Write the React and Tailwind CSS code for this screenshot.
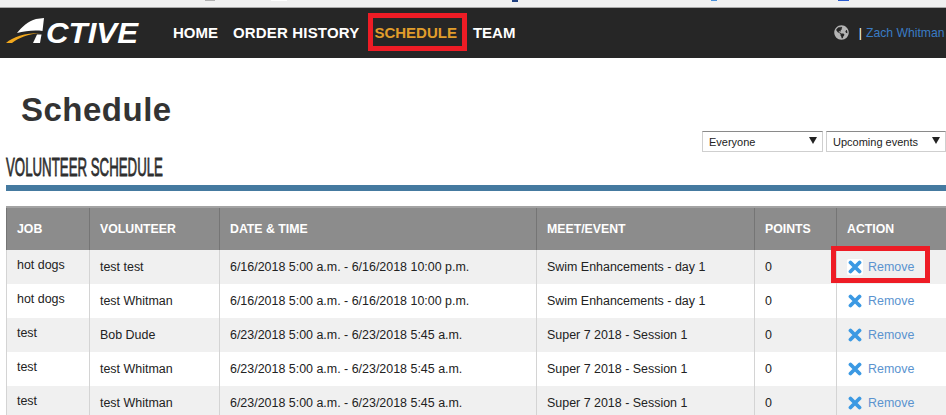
import React from "react";
import { FaGlobeAmericas } from "react-icons/fa";

const rows = [
  ["hot dogs", "test test", "6/16/2018 5:00 a.m. - 6/16/2018 10:00 p.m.", "Swim Enhancements - day 1"],
  ["hot dogs", "test Whitman", "6/16/2018 5:00 a.m. - 6/16/2018 10:00 p.m.", "Swim Enhancements - day 1"],
  ["test", "Bob Dude", "6/23/2018 5:00 a.m. - 6/23/2018 5:45 a.m.", "Super 7 2018 - Session 1"],
  ["test", "test Whitman", "6/23/2018 5:00 a.m. - 6/23/2018 5:45 a.m.", "Super 7 2018 - Session 1"],
  ["test", "test Whitman", "6/23/2018 5:00 a.m. - 6/23/2018 5:45 a.m.", "Super 7 2018 - Session 1"],
];

const heads = [
  ["JOB", "w-[83px]"],
  ["VOLUNTEER", "w-[130px]"],
  ["DATE & TIME", "w-[317px]"],
  ["MEET/EVENT", "w-[218px]"],
  ["POINTS", "w-[82px]"],
  ["ACTION", "w-[110px]"],
];

function Logo() {
  return (
    <svg width="134" height="30" viewBox="0 0 134 30" className="block overflow-visible">
      <path d="M11 17 C16 11 22 5 30 3 L38 2 L36.500 15 C28 14 19 15 11 17 Z" fill="#fff" />
      <path d="M31 18.500 L35.500 18.500 L34 27 L27 27 Z" fill="#fff" />
      <path d="M0 27 C7 21 18 17 35 17 C22 18 12 22 6 27 Z" fill="#f2a81d" />
      <text x="40" y="27" fontFamily="'Liberation Sans', sans-serif" fontSize="30" fontWeight="700" fontStyle="italic" fill="#fff" textLength="92" lengthAdjust="spacingAndGlyphs">CTIVE</text>
    </svg>
  );
}

function XIcon() {
  return (
    <svg width="14" height="14" viewBox="0 0 14 14" className="block">
      <path d="M2.500 2.500 L11.500 11.500 M11.500 2.500 L2.500 11.500" stroke="#3b99e3" strokeWidth="3.800" strokeLinecap="round" fill="none" />
    </svg>
  );
}

function Dropdown({ label, className }) {
  return (
    <div className={`flex h-[21px] items-center justify-between border border-[#cfcfcf] border-t-[#8a8a8a] bg-white pl-[6px] pr-[5px] text-[11px] text-[#222] ${className}`}>
      <span className="pt-[1px]">{label}</span>
      <svg width="8" height="7" viewBox="0 0 8 7" className="mb-[3px] block">
        <path d="M0 0 H8 L4 7 Z" fill="#222" />
      </svg>
    </div>
  );
}

export default function App() {
  return (
    <div className="h-[415px] w-[946px] overflow-hidden bg-white font-['Liberation_Sans',Arial,sans-serif]">
      <div className="relative h-[8px] border-b border-[#a9a9a9] bg-[#f0f0f0]">
        <div className="absolute left-[205px] top-0 h-[1px] w-[10px] bg-[#b0b0b0]" />
        <div className="absolute left-[271px] top-0 h-[1px] w-[16px] bg-white" />
        <div className="absolute left-[512px] top-0 h-[2px] w-[6px] bg-[#1f3f80]" />
        <div className="absolute left-[711px] top-0 h-[1px] w-[6px] bg-[#4a90d9]" />
        <div className="absolute left-[838px] top-0 h-[1px] w-[11px] bg-[#2a5bd0]" />
      </div>

      <nav className="flex h-[50px] items-center bg-[#262626]">
        <div className="ml-[6px] mt-[-4px] w-[167px]">
          <Logo />
        </div>
        <ul className="flex items-center gap-[15px] text-[15px] font-bold text-white">
          <li>HOME</li>
          <li className="tracking-[0.17px]">ORDER HISTORY</li>
          <li className="relative text-[#e19d2b]">
            SCHEDULE
            <span className="absolute bottom-[-7px] left-[-6px] right-[-10px] top-[-9px] border-[5px] border-[#ee1c25]" />
          </li>
          <li className="ml-[1px]">TEAM</li>
        </ul>
        <div className="ml-auto flex items-center overflow-hidden whitespace-nowrap text-[12.2px]">
          <FaGlobeAmericas className="h-[15px] w-[15px] text-[#b4b4b4]" />
          <span className="ml-[10px] text-white">|</span>
          <span className="ml-[4px] w-[80px] text-[#3a7cc4]">Zach Whitman</span>
        </div>
      </nav>

      <main className="pl-[6px]">
        <div className="flex h-[73px] items-start justify-between">
          <h1 className="ml-[15px] mt-[33px] text-[33px] font-bold leading-[38px] tracking-[0.5px] text-[#333]">Schedule</h1>
          <div className="mt-[73px] flex gap-[3px]">
            <Dropdown label="Everyone" className="w-[121px]" />
            <Dropdown label="Upcoming events" className="w-[120px]" />
          </div>
        </div>
        <div className="mt-[22px] h-[32px]">
          <h2 className="origin-left scale-x-[0.51] whitespace-nowrap text-[26px] font-normal leading-[28px] text-[#2f2f2f] [-webkit-text-stroke:0.8px_#2f2f2f]">VOLUNTEER SCHEDULE</h2>
        </div>
        <div className="h-[6px] bg-[#457aa0]" />

        <table className="mt-[15px] w-[940px] table-fixed border-collapse text-[12.45px] text-[#222]">
          <thead>
            <tr className="h-[43px] border-t-2 border-[#a3a3a3] bg-[#8c8c8c]">
              {heads.map(([h, w]) => (
                <th key={h} className={`${w} border-l border-[#757575] pl-[10px] text-left text-[12.3px] font-bold text-white`}>
                  {h}
                </th>
              ))}
            </tr>
          </thead>
          <tbody>
            {rows.map((r, i) => (
              <tr key={i} className={`h-[34px] ${i % 2 === 0 ? "bg-[#f0f0f0]" : "bg-white"}`}>
                <td className="border-l border-[#d4d4d4] pb-[3px] pl-[10px]">{r[0]}</td>
                {r.slice(1).map((c, j) => (
                  <td key={j} className="border-l border-[#d4d4d4] pl-[10px]">{c}</td>
                ))}
                <td className="border-l border-[#d4d4d4] pl-[10px]">0</td>
                <td className="relative border-l border-[#d4d4d4] pl-[10px]">
                  <div className="flex items-center text-[#5b93cf]">
                    <span className={`flex h-[16px] w-[16px] items-center justify-center rounded-[2px] ${i === 0 ? "bg-white" : ""}`}>
                      <XIcon />
                    </span>
                    <span className="ml-[5px]">Remove</span>
                  </div>
                  {i === 0 && (
                    <span className="absolute bottom-[1px] left-[-6px] top-[-4px] w-[99px] border-[5px] border-[#ee1c25]" />
                  )}
                </td>
              </tr>
            ))}
          </tbody>
        </table>
      </main>
    </div>
  );
}
